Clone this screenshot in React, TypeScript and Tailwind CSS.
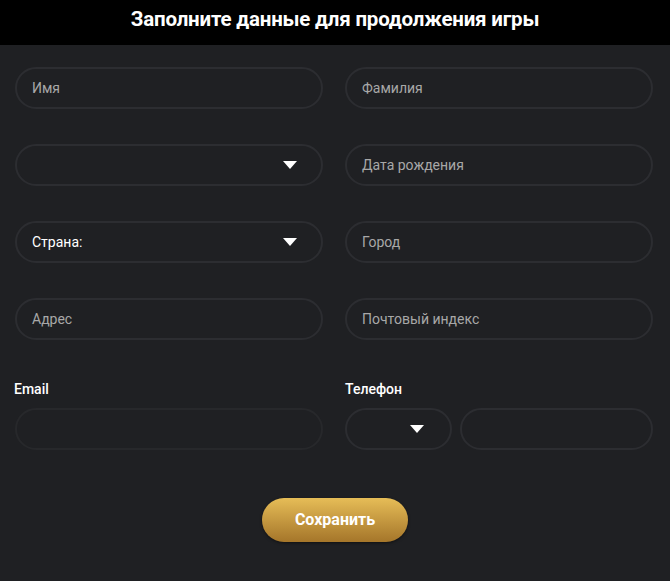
import React from "react";

const font = { fontFamily: "Roboto, 'Noto Sans', sans-serif" };

function Arrow() {
  return (
    <svg width="14" height="8" viewBox="0 0 14 8" className="shrink-0">
      <path d="M0 0 L14 0 L7 8 Z" fill="#ffffff" />
    </svg>
  );
}

function Field({ placeholder }: { placeholder: string }) {
  return (
    <div className="h-[42px] rounded-full border-2 border-[#2c2d31] flex items-center pl-[15px] pr-[24px]">
      <span className="text-[14px] text-[#a8a8a8]">{placeholder}</span>
    </div>
  );
}

function Select({ label }: { label?: string }) {
  return (
    <div className="h-[42px] rounded-full border-2 border-[#2c2d31] flex items-center justify-between pl-[15px] pr-[24px]">
      <span className="text-[14px] text-white">{label ?? ""}</span>
      <Arrow />
    </div>
  );
}

export default function App() {
  return (
    <div style={font} className="w-[670px] h-[581px] bg-[#1f2023] flex flex-col">
      <div className="h-[45px] bg-black flex items-center justify-center shrink-0 pb-[6px]">
        <h1 className="text-white font-bold text-[20.5px] tracking-[-0.2px]">
          Заполните данные для продолжения игры
        </h1>
      </div>
      <div className="pl-[15px] pr-[17px] pt-[22px] grid grid-cols-2 gap-x-[22px] gap-y-[35px]">
        <Field placeholder="Имя" />
        <Field placeholder="Фамилия" />
        <Select />
        <Field placeholder="Дата рождения" />
        <Select label="Страна:" />
        <Field placeholder="Город" />
        <Field placeholder="Адрес" />
        <Field placeholder="Почтовый индекс" />
      </div>
      <div className="pl-[15px] pr-[17px] pt-[39px] grid grid-cols-2 gap-x-[22px]">
        <div className="flex flex-col">
          <label className="text-white text-[14px] font-medium leading-[20px] mb-[9px] -ml-[1px]">Email</label>
          <div className="h-[42px] rounded-full border-2 border-[#27282b]" />
        </div>
        <div className="flex flex-col">
          <label className="text-white text-[14px] font-medium leading-[20px] mb-[9px]">Телефон</label>
          <div className="flex gap-[8px]">
            <div className="w-[107px] h-[42px] rounded-full border-2 border-[#2c2d31] flex items-center justify-end pr-[26px]">
              <Arrow />
            </div>
            <div className="flex-1 h-[42px] rounded-full border-2 border-[#2c2d31]" />
          </div>
        </div>
      </div>
      <div className="flex justify-center pt-[48px]">
        <button className="w-[146px] h-[44px] rounded-full bg-gradient-to-b from-[#e6bd57] to-[#a5762a] text-white font-bold text-[16px] shadow-[0_1px_3px_rgba(0,0,0,0.5)]">
          Сохранить
        </button>
      </div>
    </div>
  );
}
